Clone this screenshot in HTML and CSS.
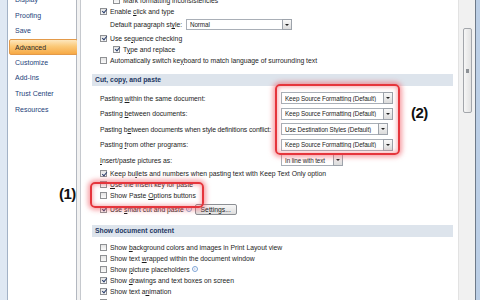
FILE: index.html
```html
<!DOCTYPE html>
<html lang="en">
<head>
    <meta charset="UTF-8">
    <title>Word Options - Advanced</title>
    <link rel="stylesheet" href="styles.css">
</head>
<body>
    <div class="window">
        <div class="frame-left"></div>

        <nav class="sidebar">
            <ul class="nav-list">
                <li>Display</li>
                <li>Proofing</li>
                <li>Save</li>
                <li class="active">Advanced</li>
                <li>Customize</li>
                <li>Add-Ins</li>
                <li>Trust Center</li>
                <li>Resources</li>
            </ul>
        </nav>
        <div class="split"></div>

        <main class="content">
            <div class="row sub first"><span class="cb"></span><span class="txt">Mark formatting inconsistencies</span></div>
            <div class="row"><span class="cb on"></span><span class="txt">Enable <u>c</u>lick and type</span></div>
            <div class="row plain tall">
                <span class="label label-short">Default paragraph st<u>y</u>le:</span>
                <span class="select w-normal"><span class="val">Normal</span><span class="drop"></span></span>
            </div>
            <div class="row"><span class="cb on"></span><span class="txt">Use se<u>q</u>uence checking</span></div>
            <div class="row sub"><span class="cb on"></span><span class="txt">T<u>y</u>pe and replace</span></div>
            <div class="row"><span class="cb"></span><span class="txt">Automatically switch ke<u>y</u>board to match language of surrounding text</span></div>

            <div class="band">Cut, copy, and paste</div>
            <div class="row sel first-sel">
                <span class="label">Pasting <u>w</u>ithin the same document:</span>
                <span class="select w-keep"><span class="val">Keep Source Formatting (Default)</span><span class="drop"></span></span>
            </div>
            <div class="row sel">
                <span class="label">Pasting <u>b</u>etween documents:</span>
                <span class="select w-keep"><span class="val">Keep Source Formatting (Default)</span><span class="drop"></span></span>
            </div>
            <div class="row sel">
                <span class="label label-tight">Pasting b<u>e</u>tween documents when style definitions conflict:</span>
                <span class="select w-dest"><span class="val">Use Destination Styles (Default)</span><span class="drop"></span></span>
            </div>
            <div class="row sel">
                <span class="label">Pasting <u>f</u>rom other programs:</span>
                <span class="select w-keep"><span class="val">Keep Source Formatting (Default)</span><span class="drop"></span></span>
            </div>
            <div class="row sel">
                <span class="label"><u>I</u>nsert/paste pictures as:</span>
                <span class="select w-inline"><span class="val">In line with text</span><span class="drop"></span></span>
            </div>
            <div class="row"><span class="cb on"></span><span class="txt">Keep bu<u>l</u>lets and numbers when pasting text with Keep Text Only option</span></div>
            <div class="row"><span class="cb"></span><span class="txt"><u>U</u>se the Insert key for paste</span></div>
            <div class="row"><span class="cb"></span><span class="txt">Show Paste <u>O</u>ptions buttons</span></div>
            <div class="row tall">
                <span class="cb on"></span><span class="txt">Use <u>s</u>mart cut and paste</span><span class="info">i</span>
                <span class="btn">Se<u>t</u>tings...</span>
            </div>

            <div class="band">Show document content</div>
            <div class="row first-after"><span class="cb"></span><span class="txt">Show <u>b</u>ackground colors and images in Print Layout view</span></div>
            <div class="row"><span class="cb"></span><span class="txt">Show text <u>w</u>rapped within the document window</span></div>
            <div class="row"><span class="cb"></span><span class="txt">Show <u>p</u>icture placeholders</span><span class="info">i</span></div>
            <div class="row"><span class="cb on"></span><span class="txt">Show <u>d</u>rawings and text boxes on screen</span></div>
            <div class="row"><span class="cb on"></span><span class="txt">Show text a<u>n</u>imation</span></div>
            <div class="row"><span class="cb"></span><span class="txt">Show boo<u>k</u>marks</span></div>
        </main>

        <div class="scrollbar"><div class="thumb"><span class="grip"></span></div></div>
        <div class="frame-right"></div>

        <!-- callouts drawn over the dialog -->
        <div class="hl hl-1"></div>
        <div class="hl hl-2"></div>
        <div class="tag tag-1">(1)</div>
        <div class="tag tag-2">(2)</div>
    </div>
</body>
</html>
```

FILE: styles.css
```css
* {
    margin: 0;
    padding: 0;
    box-sizing: border-box;
}

body {
    width: 480px;
    height: 300px;
    overflow: hidden;
    background: #fff;
    color: #1c1c1c;
    font-family: "Liberation Sans", Arial, sans-serif;
    font-size: 6.8px;
}

u {
    text-decoration-thickness: 0.5px;
    text-underline-offset: 1px;
}

.window {
    position: relative;
    display: flex;
    height: 300px;
}

.frame-left {
    width: 8px;
    flex: none;
    background: #dfe8f3;
    border-right: 1px solid #a3b2c6;
}

/* left navigation */
.sidebar {
    width: 69px;
    flex: none;
    background: #fff;
    border-right: 1px solid #b3b8c0;
}

.nav-list {
    list-style: none;
    margin-top: -8px;
    padding: 0 0 0 1px;
    font-size: 7px;
}

.nav-list li {
    height: 15.7px;
    line-height: 15.7px;
    padding-left: 6px;
    color: #24427a;
}

.nav-list li.active {
    margin-right: -2px;
    padding-left: 5px;
    background: linear-gradient(#fde7bd, #fbc978 45%, #f7a945);
    border: 1px solid #e39a4a;
    border-radius: 2px;
    color: #2b2b2b;
}

.split {
    width: 4px;
    flex: none;
    background: #f2f2f2;
    border-right: 1px solid #c6c9ce;
}

/* option pane */
.content {
    width: 377px;
    flex: none;
    overflow: hidden;
    padding: 0 5px 0 11px;
}

.row {
    display: flex;
    align-items: center;
    height: 11px;
    padding-left: 8px;
    white-space: nowrap;
}

.row.first {
    margin-top: -5.5px;
}

.row.sub {
    padding-left: 21px;
}

.row.plain {
    padding-left: 18px;
}

.row.tall {
    height: 16px;
}

.row.sel {
    height: 15.5px;
}

.row.first-sel {
    margin-top: 4.5px;
}

.row.first-after {
    margin-top: 4.5px;
}

.cb {
    position: relative;
    flex: none;
    width: 7px;
    height: 7px;
    margin-right: 3px;
    border: 1px solid #8f9194;
    background: linear-gradient(#e4e4e4, #fafafa);
}

.cb.on::after {
    content: '';
    position: absolute;
    left: 1.5px;
    top: -0.5px;
    width: 2px;
    height: 4px;
    border: solid #2c416e;
    border-width: 0 1.2px 1.2px 0;
    transform: rotate(40deg);
}

.band {
    height: 12px;
    line-height: 12px;
    margin-top: 8.5px;
    padding-left: 3px;
    background: #dde4ec;
    color: #1d3763;
    font-weight: bold;
}

.row.tall + .band {
    margin-top: 8px;
}

.label {
    width: 181px;
    flex: none;
}

.label-short {
    width: 76px;
}

.label-tight {
    letter-spacing: -0.1px;
}

.select {
    display: flex;
    align-items: center;
    height: 12px;
    border: 1px solid #a9afb7;
    background: #fff;
    padding-left: 3px;
}

.select .val {
    flex: 1;
    overflow: hidden;
    font-size: 6.3px;
    letter-spacing: -0.1px;
}

.drop {
    position: relative;
    flex: none;
    width: 10px;
    height: 12px;
    margin-right: -1px;
    border: 1px solid #9da3ab;
    background: linear-gradient(#f8f8f8, #dcdcdc);
}

.drop::after {
    content: '';
    position: absolute;
    left: 2px;
    top: 4px;
    border-top: 2px solid #222;
    border-left: 2px solid transparent;
    border-right: 2px solid transparent;
}

.w-normal { width: 106px; height: 11px; }
.w-normal .drop { height: 11px; }
.w-keep { width: 112px; }
.w-dest { width: 107px; }
.w-inline { width: 62px; }

.info {
    flex: none;
    width: 6px;
    height: 6px;
    margin-left: 2px;
    border: 1px solid #7ea4d6;
    border-radius: 50%;
    color: #3b70c2;
    font-size: 4px;
    line-height: 4px;
    text-align: center;
}

.btn {
    width: 42px;
    height: 11px;
    margin-left: 3px;
    border: 1px solid #8c8f94;
    border-radius: 2px;
    background: linear-gradient(#f7f7f7, #dedede);
    line-height: 9px;
    text-align: center;
}

/* scrollbar and frame */
.scrollbar {
    width: 17px;
    flex: none;
    padding: 28px 3px 0 4px;
    background: #f1f1f1;
    border-left: 1px solid #e2e2e2;
}

.thumb {
    display: flex;
    align-items: center;
    justify-content: center;
    height: 85px;
    border: 1px solid #a3a6ab;
    border-radius: 2px;
    background: linear-gradient(90deg, #f6f6f6, #e2e2e2);
}

.grip {
    width: 3px;
    height: 4px;
    background: #8d9196;
}

.frame-right {
    width: 5px;
    flex: none;
    background: linear-gradient(90deg, #6e7a89 0 1px, #bccfe6 1px);
}

/* red callouts */
.hl {
    position: absolute;
    border: 2px solid #e5353c;
    border-radius: 5px;
    box-shadow: 0 0 5px 2px rgba(240, 90, 100, 0.6), inset 0 0 4px 1px rgba(240, 90, 100, 0.5);
}

.hl-1 {
    left: 90px;
    top: 182px;
    width: 114px;
    height: 26px;
}

.hl-2 {
    left: 275px;
    top: 84px;
    width: 125px;
    height: 71px;
}

.tag {
    position: absolute;
    color: #111;
    font-size: 15px;
    font-weight: bold;
    letter-spacing: -0.6px;
}

.tag-1 {
    left: 59px;
    top: 185px;
}

.tag-2 {
    left: 411px;
    top: 104px;
}
```
